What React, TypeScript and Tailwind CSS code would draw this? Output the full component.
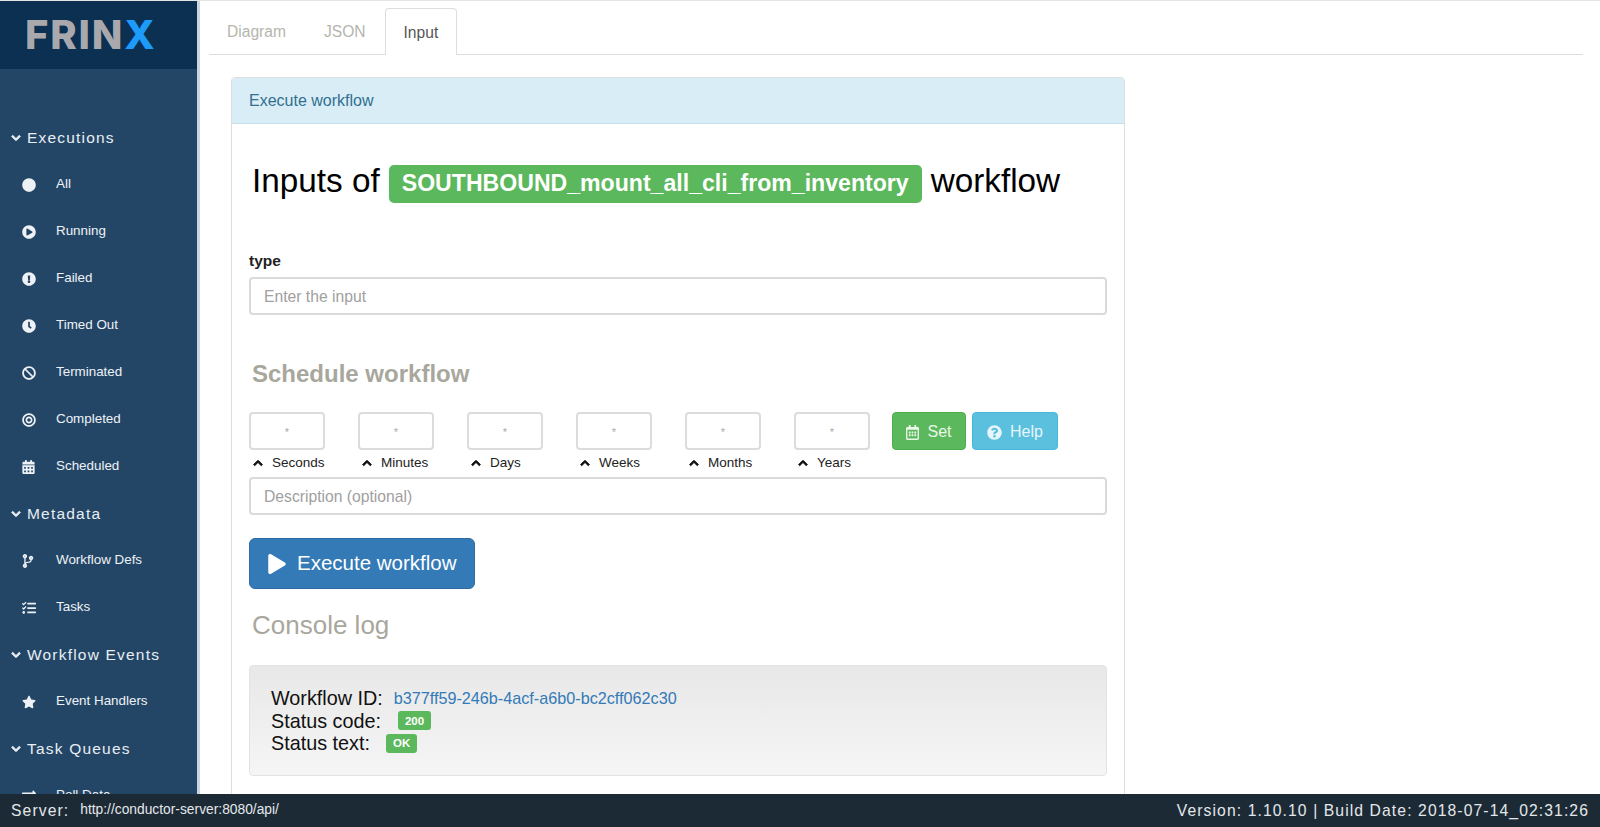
import {
  FaBan,
  FaBullseye,
  FaCalendarAlt,
  FaChevronDown,
  FaChevronUp,
  FaCircle,
  FaClock,
  FaCodeBranch,
  FaExchangeAlt,
  FaExclamationCircle,
  FaPlay,
  FaPlayCircle,
  FaQuestionCircle,
  FaRegCalendarAlt,
  FaStar,
  FaTasks,
} from "react-icons/fa"
import type { ReactNode } from "react"

const SectionRow = ({ title }: { title: string }) => (
  <div className="flex items-center h-[47px] pl-[11px] text-[15.5px] tracking-[1.2px] text-[#e8eef4]">
    <FaChevronDown className="w-[10px] h-[10px] mr-[6px] stroke-current stroke-[50]" />
    <span>{title}</span>
  </div>
)

const ItemRow = ({ icon, label }: { icon: ReactNode; label: string }) => (
  <div className="flex items-center h-[47px] text-[13.4px] text-[#eef2f6]">
    <div className="w-[56px] pl-[22px] shrink-0 flex items-center">{icon}</div>
    <span>{label}</span>
  </div>
)

const iconClass = "w-[14px] h-[14px]"

const Sidebar = () => (
  <aside className="w-[197px] shrink-0 bg-[#244666] border-r-[3px] border-[#c9d6e2] box-content overflow-hidden">
    <div className="h-[68px] bg-[#0b3051] flex items-center pl-[25px] font-['Inter',sans-serif] text-[40px] font-extrabold leading-none tracking-[1.8px]">
      <span className="text-[#a9a9ad]">FRIN</span>
      <span className="text-[#1c9bfb]">X</span>
    </div>
    <div className="pt-[45px]">
      <SectionRow title="Executions" />
      <ItemRow icon={<FaCircle className={iconClass} />} label="All" />
      <ItemRow icon={<FaPlayCircle className={iconClass} />} label="Running" />
      <ItemRow icon={<FaExclamationCircle className={iconClass} />} label="Failed" />
      <ItemRow icon={<FaClock className={iconClass} />} label="Timed Out" />
      <ItemRow icon={<FaBan className={iconClass} />} label="Terminated" />
      <ItemRow icon={<FaBullseye className={iconClass} />} label="Completed" />
      <ItemRow icon={<FaCalendarAlt className="w-[13px] h-[14px]" />} label="Scheduled" />
      <SectionRow title="Metadata" />
      <ItemRow icon={<FaCodeBranch className="w-[12px] h-[14px]" />} label="Workflow Defs" />
      <ItemRow icon={<FaTasks className={iconClass} />} label="Tasks" />
      <SectionRow title="Workflow Events" />
      <ItemRow icon={<FaStar className={iconClass} />} label="Event Handlers" />
      <SectionRow title="Task Queues" />
      <ItemRow icon={<FaExchangeAlt className={iconClass} />} label="Poll Data" />
    </div>
  </aside>
)

const cronFields = ["Seconds", "Minutes", "Days", "Weeks", "Months", "Years"]

const CronField = ({ label }: { label: string }) => (
  <div className="w-[76px]">
    <div className="h-[38px] pt-[3px] border-2 border-[#dcdcdc] rounded-[4px] flex items-center justify-center text-[11px] text-[#aaaaaa]">
      *
    </div>
    <div className="flex items-center h-[26px] pl-[4px] text-[13.5px] text-[#222222] whitespace-nowrap">
      <FaChevronUp className="w-[10px] h-[10px] mr-[9px] text-[#111111] stroke-current stroke-[50]" />
      {label}
    </div>
  </div>
)

const App = () => {
  return (
    <div className="h-screen flex flex-col overflow-hidden font-['Liberation_Sans',Arial,sans-serif] bg-white">
      <div className="flex-1 flex min-h-0 border-t border-[#e4e4e4]">
        <Sidebar />
        <main className="flex-1 min-w-0 overflow-hidden pl-[9px] pr-[17px] pt-[7px]">
          <div className="flex h-[47px] border-b border-[#dddddd] text-[15.6px]">
            <div className="flex items-center h-full pt-[1px] px-[18px] text-[#b5b5ad]">Diagram</div>
            <div className="flex items-center h-full pt-[1px] pl-[20px] pr-[18px] text-[#b5b5ad]">JSON</div>
            <div className="flex items-center h-[47px] pt-[1px] px-[18px] ml-[1px] bg-white border border-b-0 border-[#dddddd] rounded-t-[4px] text-[#555555]">
              Input
            </div>
          </div>

          <div className="ml-[22px] mt-[22px] w-[894px] border border-[#dddddd] rounded-[4px]">
            <div className="h-[46px] flex items-center pt-[1px] px-[17px] bg-[#d9edf7] border-b border-[#c8dfec] rounded-t-[4px] text-[16px] text-[#31708f]">
              Execute workflow
            </div>
            <div className="px-[17px] pt-[41px] pb-[20px]">
              <div className="flex items-center h-[38px] pl-[3px] text-[33.3px] text-black">
                <span className="pb-[7px]">Inputs of</span>
                <span className="mx-[9px] h-[38px] pb-[1px] px-[13px] flex items-center bg-[#5cb85c] rounded-[5px] text-white text-[23.1px] font-bold">
                  SOUTHBOUND_mount_all_cli_from_inventory
                </span>
                <span className="pb-[7px]">workflow</span>
              </div>

              <div className="mt-[48px] h-[26px] text-[15.5px] font-bold text-[#222222] leading-[20px]">type</div>
              <input
                placeholder="Enter the input"
                className="block w-full h-[38px] pt-[2px] border-2 border-[#dadada] rounded-[4px] px-[13px] text-[15.7px] placeholder:text-[#a0a0a0] bg-white"
              />

              <div className="mt-[42px] pl-[3px] h-[34px] leading-[34px] text-[24px] font-bold text-[#a8a79d]">
                Schedule workflow
              </div>

              <div className="mt-[21px] flex">
                <div className="flex gap-[33px]">
                  {cronFields.map((f) => (
                    <CronField key={f} label={f} />
                  ))}
                </div>
                <button className="ml-[22px] h-[38px] w-[74px] pt-[2px] flex items-center justify-center gap-[8px] bg-[#5cb85c] border border-[#4cae4c] rounded-[4px] text-[16px] text-[#e9f6e9]">
                  <FaRegCalendarAlt className="w-[13px] h-[15px]" />
                  Set
                </button>
                <button className="ml-[6px] h-[38px] w-[86px] pt-[2px] flex items-center justify-center gap-[8px] bg-[#5bc0de] border border-[#46b8da] rounded-[4px] text-[16px] text-[#e6f6fb]">
                  <FaQuestionCircle className="w-[15px] h-[15px]" />
                  Help
                </button>
              </div>

              <input
                placeholder="Description (optional)"
                className="mt-[1px] block w-full h-[38px] pt-[2px] border-2 border-[#dadada] rounded-[4px] px-[13px] text-[15.7px] placeholder:text-[#a0a0a0] bg-white"
              />

              <button className="mt-[23px] h-[51px] w-[226px] flex items-center pl-[18px] gap-[11px] bg-[#337ab7] border border-[#2e6da4] rounded-[6px] text-[20.5px] text-white">
                <FaPlay className="w-[18px] h-[20px]" />
                Execute workflow
              </button>

              <div className="mt-[19px] pl-[3px] h-[34px] leading-[34px] text-[26px] text-[#a8a79d]">Console log</div>

              <div className="mt-[23px] h-[111px] px-[21px] pt-[21px] border border-[#e3e3e3] rounded-[4px] bg-linear-to-b from-[#e8e8e8] to-[#f5f5f5] text-[19.8px] leading-[22.5px] text-[#111111]">
                <div className="flex items-center">
                  Workflow ID:
                  <span className="ml-[11px] text-[16.2px] text-[#337ab7]">b377ff59-246b-4acf-a6b0-bc2cff062c30</span>
                </div>
                <div className="flex items-center">
                  Status code:
                  <span className="ml-[17px] px-[7px] h-[19px] flex items-center bg-[#5cb85c] rounded-[3px] text-[11.5px] font-bold text-white">
                    200
                  </span>
                </div>
                <div className="flex items-center">
                  Status text:
                  <span className="ml-[16px] px-[7px] h-[19px] flex items-center bg-[#5cb85c] rounded-[3px] text-[11.5px] font-bold text-white">
                    OK
                  </span>
                </div>
              </div>
            </div>
          </div>
        </main>
      </div>

      <footer className="h-[33px] shrink-0 bg-[#1c2a36] flex items-center justify-between pl-[11px] pr-[11px] text-[15.7px] tracking-[1.1px] text-[#e4e7ea]">
        <div className="flex items-center">
          <span>Server:</span>
          <span className="ml-[11px] text-[13.8px] tracking-normal">http://conductor-server:8080/api/</span>
        </div>
        <div>Version: 1.10.10 | Build Date: 2018-07-14_02:31:26</div>
      </footer>
    </div>
  )
}

export default App
